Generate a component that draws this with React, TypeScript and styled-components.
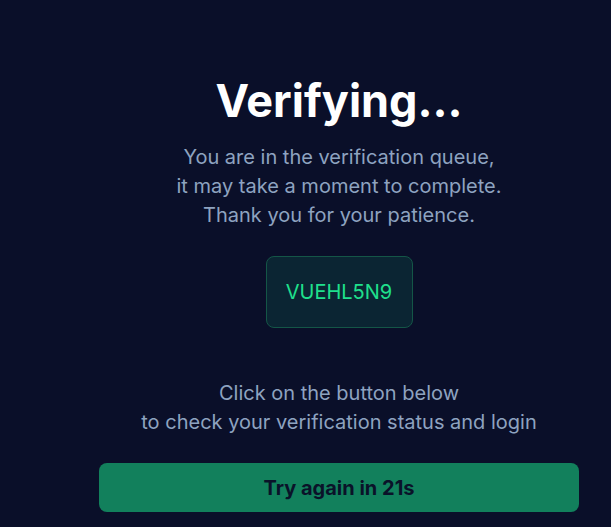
import React from "react";
import styled, { createGlobalStyle } from "styled-components";

const Global = createGlobalStyle`
  html, body { margin: 0; padding: 0; background: #0a0f29; }
  body { font-family: Inter, "Noto Sans", sans-serif; }
`;

const Page = styled.div`
  min-height: 527px;
  background: #0a0f29;
  padding: 69px 0 0 99px;
  box-sizing: border-box;
`;

const Column = styled.div`
  width: 480px;
  display: flex;
  flex-direction: column;
  align-items: center;
  text-align: center;
`;

const Title = styled.h1`
  margin: 0;
  font-size: 45px;
  font-weight: 700;
  line-height: 64px;
  color: #ffffff;
`;

const Text = styled.p<{ $mt: number }>`
  margin: ${(p) => p.$mt}px 0 0;
  font-size: 20px;
  line-height: 29px;
  color: #8ea3c0;
`;

const Code = styled.div`
  margin-top: 26px;
  width: 147px;
  height: 72px;
  box-sizing: border-box;
  display: flex;
  align-items: center;
  justify-content: center;
  background: #0b2533;
  border: 1px solid #145647;
  border-radius: 8px;
  color: #1fe08c;
  font-size: 20px;
  font-weight: 400;
`;

const Button = styled.button`
  margin-top: 26px;
  width: 480px;
  height: 49px;
  border: none;
  border-radius: 8px;
  background: #12805c;
  color: #0a1229;
  font-family: Inter, "Noto Sans", sans-serif;
  font-size: 20px;
  font-weight: 700;
  cursor: pointer;
`;

export default function App() {
  return (
    <>
      <Global />
      <Page>
        <Column>
          <Title>Verifying...</Title>
          <Text $mt={10}>
            You are in the verification queue,
            <br />
            it may take a moment to complete.
            <br />
            Thank you for your patience.
          </Text>
          <Code>VUEHL5N9</Code>
          <Text $mt={51}>
            Click on the button below
            <br />
            to check your verification status and login
          </Text>
          <Button>Try again in 21s</Button>
        </Column>
      </Page>
    </>
  );
}
